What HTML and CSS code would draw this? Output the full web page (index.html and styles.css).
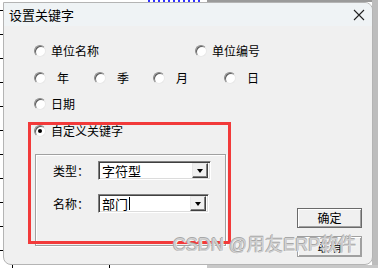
FILE: index.html
```html
<!DOCTYPE html>
<html lang="zh">
<head>
<meta charset="utf-8">
<link rel="stylesheet" href="styles.css">
</head>
<body>
<div class="desk">
  <div class="left-ticks"></div>
  <div class="top-strip"><span class="blue"></span><span class="gline"></span></div>
  <div class="right-strip"></div>
  <div class="bottom-strip"></div>

  <div class="dialog">
    <div class="titlebar">
      <span class="title">设置关键字</span>
      <svg class="close" width="12" height="12" viewBox="0 0 12 12"><path d="M1 1 L11 11 M11 1 L1 11" stroke="#222" stroke-width="1.1" fill="none"/></svg>
    </div>
    <div class="body">
      <div class="main">
        <div class="options">
          <div class="row">
            <label class="opt w161"><span class="radio"></span><span class="txt">单位名称</span></label>
            <label class="opt"><span class="radio"></span><span class="txt">单位编号</span></label>
          </div>
          <div class="row wide">
            <label class="opt w60"><span class="radio"></span><span class="txt">年</span></label>
            <label class="opt w59"><span class="radio"></span><span class="txt">季</span></label>
            <label class="opt w71"><span class="radio"></span><span class="txt">月</span></label>
            <label class="opt"><span class="radio"></span><span class="txt">日</span></label>
          </div>
          <div class="row">
            <label class="opt"><span class="radio"></span><span class="txt">日期</span></label>
          </div>
          <div class="row">
            <label class="opt"><span class="radio checked"></span><span class="txt">自定义关键字</span></label>
          </div>
        </div>
        <div class="group">
          <div class="field">
            <span class="flabel">类型：</span>
            <div class="combo w113"><span class="cval">字符型</span><span class="arrow"><i></i></span></div>
          </div>
          <div class="field">
            <span class="flabel">名称：</span>
            <div class="combo w111"><span class="cval">部门<span class="caret"></span></span><span class="arrow"><i></i></span></div>
          </div>
        </div>
      </div>
      <div class="buttons">
        <button class="btn default">确定</button>
        <button class="btn">取消</button>
      </div>
    </div>
  </div>

  <div class="highlight"></div>
  <div class="watermark">CSDN @用友ERP软件</div>
</div>
</body>
</html>
```

FILE: styles.css
```css
* { box-sizing: border-box; }
html, body { margin: 0; padding: 0; background: #fff; }
body { font-family: "Noto Sans CJK SC", "Noto Sans", sans-serif; }

.desk { position: relative; width: 378px; height: 268px; overflow: hidden; background: #fff; }

.left-ticks {
  position: absolute; left: 0; top: 0; width: 3px; height: 268px;
  background: repeating-linear-gradient(to bottom, transparent 0 10px, #000 10px 11px, transparent 11px 24px);
}
.top-strip { position: absolute; left: 0; top: 0; width: 378px; height: 2px; }
.top-strip .blue {
  position: absolute; left: 148px; top: 0; width: 52px; height: 2px;
  background: repeating-linear-gradient(to right, #3030ff 0 2px, transparent 2px 5px);
}
.top-strip .gline { position: absolute; left: 207px; top: 0; width: 171px; height: 2px; background: #9a9a9a; }
.right-strip { position: absolute; right: 0; top: 0; width: 6px; height: 268px; background: #bdbdbd; }
.bottom-strip {
  position: absolute; left: 0; bottom: 0; width: 378px; height: 3px;
  background: linear-gradient(to right, transparent 0 12px, #000 12px 13px, transparent 13px 109px, #000 109px 110px, transparent 110px 207px, #c8c8c8 207px);
}

.dialog {
  position: absolute; left: 3px; top: 2px; width: 370px; height: 263px;
  border: 1px solid #b4b4b4; border-radius: 0 8px 8px 8px;
  background: #f0f0f0; overflow: hidden;
}
.titlebar {
  height: 23px; background: #eff3f5; display: flex; align-items: center;
  justify-content: space-between; padding: 0 7px 0 5px;
}
.title { font-size: 13px; color: #000; line-height: 1; margin-top: -1px; }
.close { margin-top: 1px; }

.body { display: flex; padding: 0 0 0 30px; font-size: 12px; color: #000; }
.main { width: 263px; }

.options { display: flex; flex-direction: column; row-gap: 6.7px; padding-top: 15px; }
.row { display: flex; height: 20px; align-items: center; }
.opt { display: flex; align-items: center; gap: 5px; line-height: 1; white-space: nowrap; }
.row.wide .opt { gap: 11px; }
.w161 { width: 161px; }
.w60 { width: 60px; }
.w59 { width: 59px; }
.w71 { width: 71px; }
.txt { font-size: 12px; }

.radio {
  width: 12px; height: 12px; border-radius: 50%; background: #fff; flex: none;
  border: 1px solid; border-color: #8a8a8a #e8e8e8 #e8e8e8 #8a8a8a;
  box-shadow: inset 1px 1px 0 #5a5a5a;
  display: flex; align-items: center; justify-content: center;
}
.radio.checked::after { content: ""; width: 4px; height: 4px; border-radius: 50%; background: #000; }

.group {
  margin-top: 13px; margin-left: 1px; width: 191px; height: 92px;
  border: 1px solid #a0a0a0; box-shadow: inset 1px 1px 0 #fff, 1px 1px 0 #fff;
  padding: 6px 0 0 17px; display: flex; flex-direction: column; row-gap: 14px;
}
.field { display: flex; align-items: center; height: 19px; }
.flabel { width: 45px; font-size: 12px; line-height: 1; }
.combo {
  height: 19px; background: #fff; display: flex; align-items: center; justify-content: space-between;
  border: 1px solid; border-color: #808080 #fff #fff #808080;
  box-shadow: inset 1px 1px 0 #404040, inset -1px -1px 0 #dcdcdc;
  padding: 2px 2px 2px 3px;
}
.w113 { width: 113px; }
.w111 { width: 111px; }
.cval { font-size: 13px; line-height: 1; display: flex; align-items: center; }
.caret { display: inline-block; width: 1px; height: 13px; background: #000; margin-left: 1px; }
.arrow {
  width: 16px; height: 15px; background: #f0f0f0; display: flex; align-items: center; justify-content: center;
  border: 1px solid; border-color: #e8e8e8 #404040 #404040 #e8e8e8;
  box-shadow: inset -1px -1px 0 #808080;
}
.arrow i { width: 0; height: 0; border-left: 3.5px solid transparent; border-right: 3.5px solid transparent; border-top: 4px solid #000; margin-top: 1px; }

.buttons { display: flex; flex-direction: column; row-gap: 8px; padding-top: 182px; margin-left: 0; }
.btn {
  width: 65px; height: 20px; font-family: "Noto Sans CJK SC", sans-serif; font-size: 12px; line-height: 1;
  background: #f0f0f0; color: #000; padding: 0;
  border: 1px solid #6a6a6a; box-shadow: inset 1px 1px 0 #fff, inset -1px -1px 0 #a0a0a0;
}
.btn + .btn { height: 21px; border-color: #a0a0a0; }

.highlight {
  position: absolute; left: 28px; top: 122px; width: 203px; height: 122px;
  border: 3px solid #f23a3a;
}
.watermark {
  position: absolute; left: 173px; top: 234px; font-size: 18px; line-height: 22px; white-space: nowrap;
  color: #d2d2d2;
  text-shadow: -1px 0 0 #a8a8a8, 0 -1px 0 #a8a8a8, 1px 1px 0 #f4f4f4;
  font-family: "Liberation Sans", "Noto Sans CJK SC", sans-serif;
}
```
